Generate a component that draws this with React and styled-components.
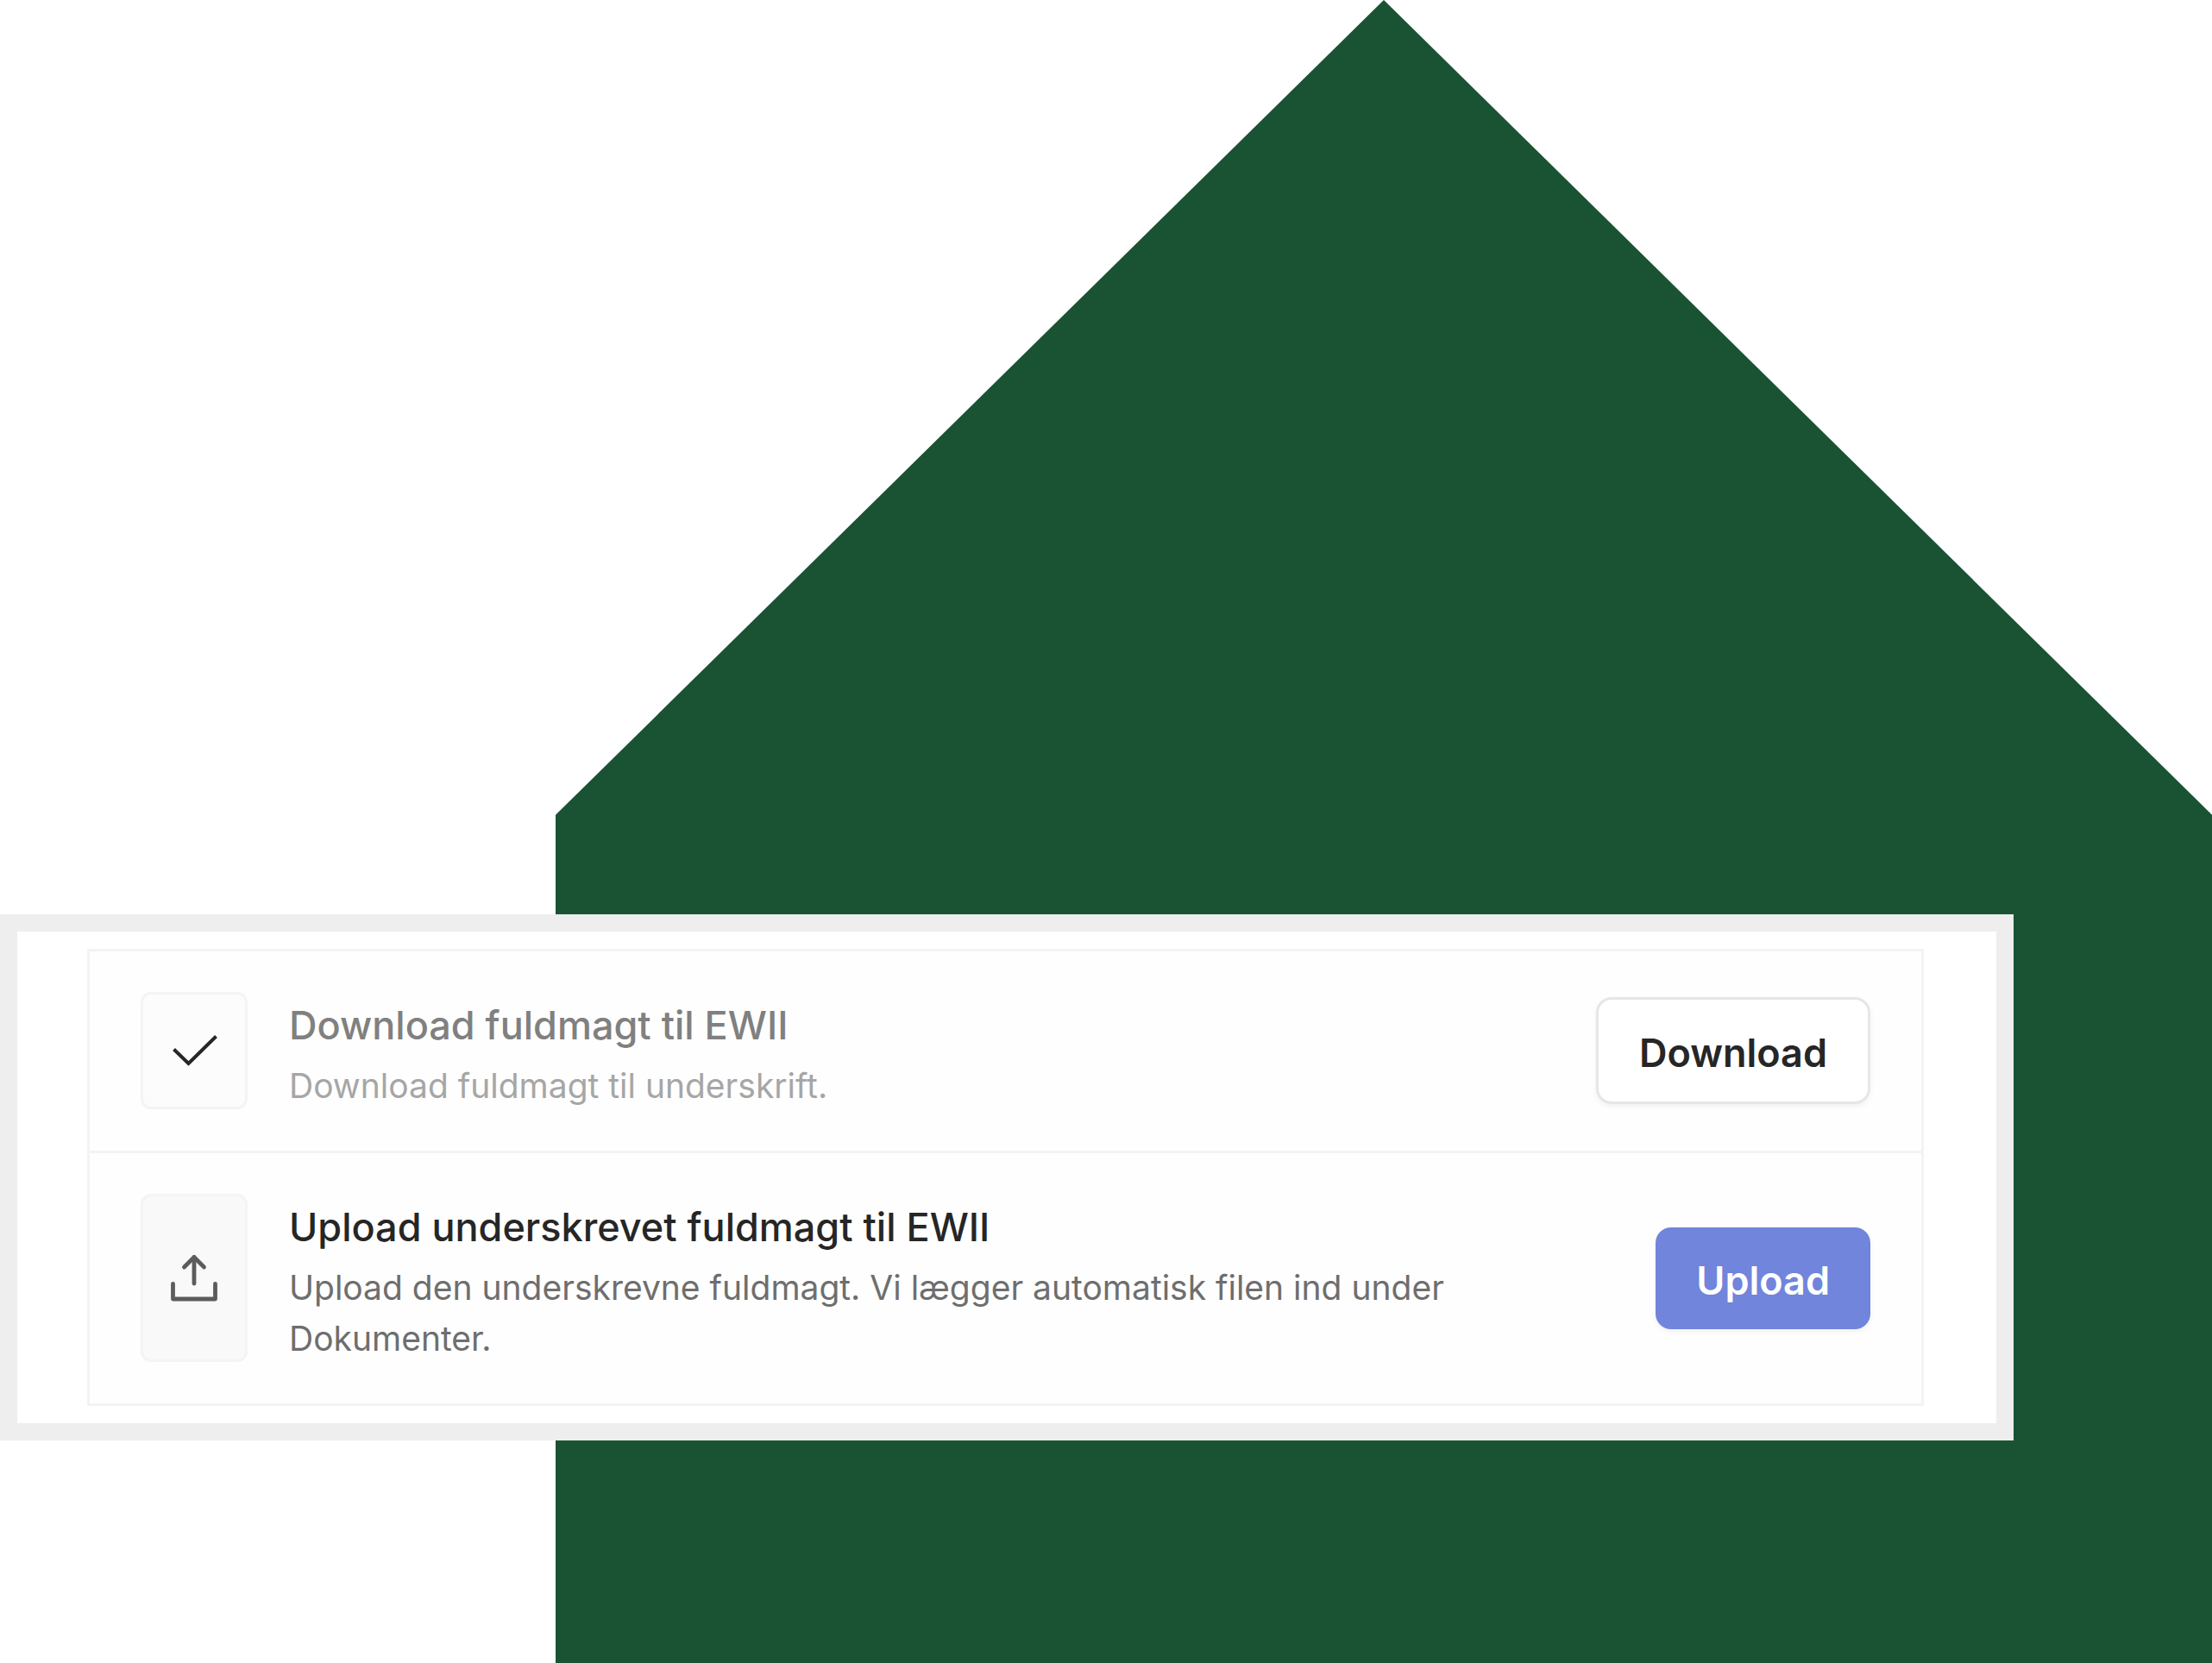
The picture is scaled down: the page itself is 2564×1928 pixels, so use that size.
import React from "react";
import styled, { createGlobalStyle } from "styled-components";

const GlobalStyle = createGlobalStyle`
  *, *::before, *::after { box-sizing: border-box; }
  body {
    margin: 0;
    background: #ffffff;
    font-family: Inter, "Liberation Sans", sans-serif;
  }
`;

const Scene = styled.main`
  display: grid;
  grid-template-columns: minmax(0, 644fr) minmax(0, 1690fr) minmax(0, 230fr);
  grid-template-rows: 1060fr auto 258fr;
  min-height: 100vh;
`;

const House = styled.div`
  grid-column: 2 / -1;
  grid-row: 1 / -1;
  background: #195333;
  clip-path: polygon(50% 0, 100% 49%, 100% 100%, 0 100%, 0 49%);
`;

const Card = styled.section`
  grid-column: 1 / 3;
  grid-row: 2;
  z-index: 1;
  padding: 20px 84px 20px 81px;
  border: 20px solid #eeeeee;
  background: #ffffff;
`;

const StepList = styled.ul`
  margin: 0;
  padding: 0;
  list-style: none;
  border: 3px solid #f3f3f3;
  background: #fefefe;
`;

const Step = styled.li`
  display: flex;
  align-items: center;
  gap: 48px;
  padding: 47px 59px 48px;

  & + & {
    border-top: 3px solid #f3f3f3;
  }
`;

const IconTile = styled.div`
  display: flex;
  flex: none;
  align-items: center;
  justify-content: center;
  align-self: stretch;
  width: 124px;
  border: 3px solid #f4f4f4;
  border-radius: 12px;
  background: ${(p) => (p.$done ? "#fcfcfc" : "#f9f9f9")};
`;

const Icon = styled.svg`
  display: block;
  width: 60px;
  height: 60px;
  fill: none;
  stroke: ${(p) => p.$color};
  stroke-width: ${(p) => p.$weight};
`;

const StepText = styled.div`
  flex: 1;
  min-width: 0;
`;

const Title = styled.h2`
  margin: 0;
  padding: 10px 0 11px;
  font-size: 45px;
  font-weight: 500;
  line-height: 58px;
  color: ${(p) => (p.$done ? "#808080" : "#262626")};
`;

const Description = styled.p`
  max-width: 1400px;
  margin: 0 0 -2px;
  font-size: 39px;
  font-weight: 400;
  line-height: 59px;
  color: ${(p) => (p.$done ? "#a6a6a6" : "#6e6e6e")};
`;

const Button = styled.button`
  flex: none;
  padding: 33px 47px 27px;
  border: 0;
  border-radius: 18px;
  background: #7085db;
  box-shadow: 0 3px 6px rgba(0, 0, 0, 0.05);
  font-family: inherit;
  font-size: 45px;
  font-weight: 600;
  line-height: 58px;
  color: #ffffff;
`;

const OutlineButton = styled(Button)`
  border: 3px solid #e6e6e6;
  background: #ffffff;
  color: #262626;
`;

function CheckIcon() {
  return (
    <Icon viewBox="0 0 60 60" $color="#262626" $weight={4} aria-hidden="true">
      <path d="M6.5 28.5L23.5 45L55.5 13.5" />
    </Icon>
  );
}

function UploadIcon() {
  return (
    <Icon
      viewBox="0 0 60 60"
      $color="#5c5c5c"
      $weight={4.8}
      strokeLinecap="round"
      strokeLinejoin="round"
      aria-hidden="true"
    >
      <path d="M5.5 36.5V54H54.5V36.5" />
      <path d="M30 36V5.5" />
      <path d="M18.5 17L30 5.5L41.5 17" />
    </Icon>
  );
}

export default function App() {
  return (
    <>
      <GlobalStyle />
      <Scene>
        <House />
        <Card>
          <StepList>
            <Step>
              <IconTile $done>
                <CheckIcon />
              </IconTile>
              <StepText>
                <Title $done>Download fuldmagt til EWII</Title>
                <Description $done>Download fuldmagt til underskrift.</Description>
              </StepText>
              <OutlineButton type="button">Download</OutlineButton>
            </Step>
            <Step>
              <IconTile>
                <UploadIcon />
              </IconTile>
              <StepText>
                <Title>Upload underskrevet fuldmagt til EWII</Title>
                <Description>
                  Upload den underskrevne fuldmagt. Vi lægger automatisk filen ind under
                  Dokumenter.
                </Description>
              </StepText>
              <Button type="button">Upload</Button>
            </Step>
          </StepList>
        </Card>
      </Scene>
    </>
  );
}
